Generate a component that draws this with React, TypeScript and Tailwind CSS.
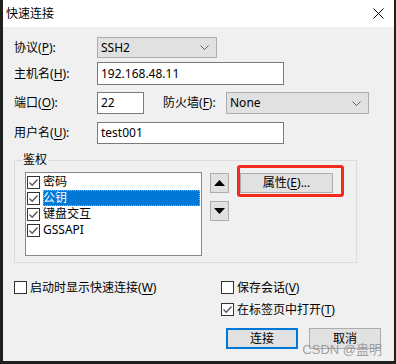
import React from "react";

const Chevron = () => (
  <svg width="9" height="5" viewBox="0 0 9 5" className="block">
    <path d="M0.5 0.5 L4.5 4.5 L8.5 0.5" fill="none" stroke="#606060" strokeWidth="1" />
  </svg>
);

const Check = () => (
  <svg width="11" height="11" viewBox="0 0 11 11" className="block">
    <path d="M1.5 5.5 L4.2 8.2 L9.5 2.5" fill="none" stroke="#5a5a5a" strokeWidth="1.4" />
  </svg>
);

const Box = ({ checked }: { checked?: boolean }) => (
  <div className="w-[13px] h-[13px] shrink-0 border border-[#333333] bg-white flex items-center justify-center">
    {checked ? <Check /> : null}
  </div>
);

const Mn = ({ pre, k, post }: { pre: string; k: string; post?: string }) => (
  <span className="whitespace-nowrap">
    {pre}(<span className="underline underline-offset-[2px]">{k}</span>){post ?? ""}
  </span>
);

const Select = ({ value, w }: { value: string; w: string }) => (
  <div className={`${w} h-full bg-[#e1e1e1] border border-[#adadad] flex items-center justify-between pl-[3px] pr-[7px]`}>
    <span>{value}</span>
    <Chevron />
  </div>
);

const Input = ({ value, w }: { value: string; w: string }) => (
  <div className={`${w} h-full bg-white border border-[#7a7a7a] flex items-center pl-[3px]`}>
    <span>{value}</span>
  </div>
);

const Arrow = ({ up }: { up?: boolean }) => (
  <div className="w-[19px] h-[20px] bg-[#e1e1e1] border border-[#adadad] flex items-center justify-center">
    <svg width="11" height="6" viewBox="0 0 11 6" className="block">
      {up ? <path d="M0 6 L5.5 0 L11 6 Z" fill="#000" /> : <path d="M0 0 L5.5 6 L11 0 Z" fill="#000" />}
    </svg>
  </div>
);

const Item = ({ label, selected }: { label: string; selected?: boolean }) => (
  <div className="h-[16px] flex items-center">
    <Box checked />
    <div
      className={
        selected
          ? "ml-[3px] flex-1 h-[16px] mr-[1px] bg-[#0078d7] text-white flex items-center border border-dotted border-[#f0a040]"
          : "ml-[3px] flex-1 h-[16px] flex items-center"
      }
    >
      <span className={selected ? "-ml-[1px]" : ""}>{label}</span>
    </div>
  </div>
);

export default function App() {
  return (
    <div className="w-[396px] h-[364px] bg-[#1f1f1f] pl-[3px] pr-[2px] pb-[3px] font-['Noto_Sans','Noto_Sans_CJK_SC',sans-serif] text-[12px] leading-[16px] text-black">
      <div className="w-[391px] h-[361px] flex flex-col">
        <div className="h-[27px] bg-white flex items-center justify-between pl-[3px] pr-[10px] shrink-0">
          <span className="text-[12px]">快速连接</span>
          <svg width="11" height="11" viewBox="0 0 11 11" className="block">
            <path d="M0.5 0.5 L10.5 10.5 M10.5 0.5 L0.5 10.5" stroke="#000" strokeWidth="1" />
          </svg>
        </div>
        <div className="relative flex-1 bg-[#f0f0f0] flex flex-col pl-[11px] pt-[10px]">
          <div className="flex items-center h-[21px]">
            <div className="w-[83px]"><Mn pre="协议" k="P" post=":" /></div>
            <Select value="SSH2" w="w-[120px]" />
          </div>
          <div className="flex items-center h-[23px] mt-[4px]">
            <div className="w-[83px]"><Mn pre="主机名" k="H" post=":" /></div>
            <Input value="192.168.48.11" w="w-[187px]" />
          </div>
          <div className="flex items-center h-[22px] mt-[7px]">
            <div className="w-[83px]"><Mn pre="端口" k="O" post=":" /></div>
            <Input value="22" w="w-[47px]" />
            <div className="ml-[19px] w-[63px]"><Mn pre="防火墙" k="F" post=":" /></div>
            <Select value="None" w="w-[143px]" />
          </div>
          <div className="flex items-center h-[22px] mt-[8px]">
            <div className="w-[83px]"><Mn pre="用户名" k="U" post=":" /></div>
            <Input value="test001" w="w-[187px]" />
          </div>

          <div className="relative mt-[16px] w-[343px] h-[103px] border border-[#dcdcdc] shrink-0">
            <span className="absolute left-[7px] -top-[9px] bg-[#f0f0f0] px-[1px]">鉴权</span>
            <div className="flex pt-[11px] pl-[10px]">
              <div className="w-[177px] h-[84px] bg-white border border-[#828790] pt-[1px] pl-[1px]">
                <Item label="密码" />
                <Item label="公钥" selected />
                <Item label="键盘交互" />
                <Item label="GSSAPI" />
              </div>
              <div className="ml-[8px] mt-[1px] flex flex-col gap-[8px]">
                <Arrow up />
                <Arrow />
              </div>
              <div className="relative ml-[11px] mt-[1px]">
                <div className="w-[93px] h-[20px] bg-[#e1e1e1] border border-[#adadad] flex items-center justify-center">
                  <Mn pre="属性" k="E" post="..." />
                </div>
                <div className="absolute -left-[3px] -top-[8px] w-[107px] h-[32px] border-[3px] border-[#f52a1d] rounded-[3px]" />
              </div>
            </div>
          </div>

          <div className="flex mt-[18px] h-[13px] items-center">
            <div className="w-[207px] flex items-center gap-[3px]">
              <Box />
              <Mn pre="启动时显示快速连接" k="W" />
            </div>
            <div className="flex items-center gap-[3px]">
              <Box />
              <Mn pre="保存会话" k="V" />
            </div>
          </div>
          <div className="flex mt-[9px] h-[13px] items-center pl-[207px]">
            <div className="flex items-center gap-[3px]">
              <Box checked />
              <Mn pre="在标签页中打开" k="T" />
            </div>
          </div>

          <div className="flex justify-end gap-[11px] pr-[13px] mt-[12px]">
            <div className="w-[72px] h-[21px] bg-[#e1e1e1] border-2 border-[#0078d7] flex items-center justify-center">连接</div>
            <div className="w-[72px] h-[21px] bg-[#e1e1e1] border border-[#adadad] flex items-center justify-center">取消</div>
          </div>

          <span className="absolute right-[12px] bottom-[4px] text-[13px] leading-[14px] text-[#8a8a8a]/80 font-['Liberation_Sans','Noto_Sans_CJK_SC',sans-serif]">CSDN @蛊明</span>
        </div>
      </div>
    </div>
  );
}
